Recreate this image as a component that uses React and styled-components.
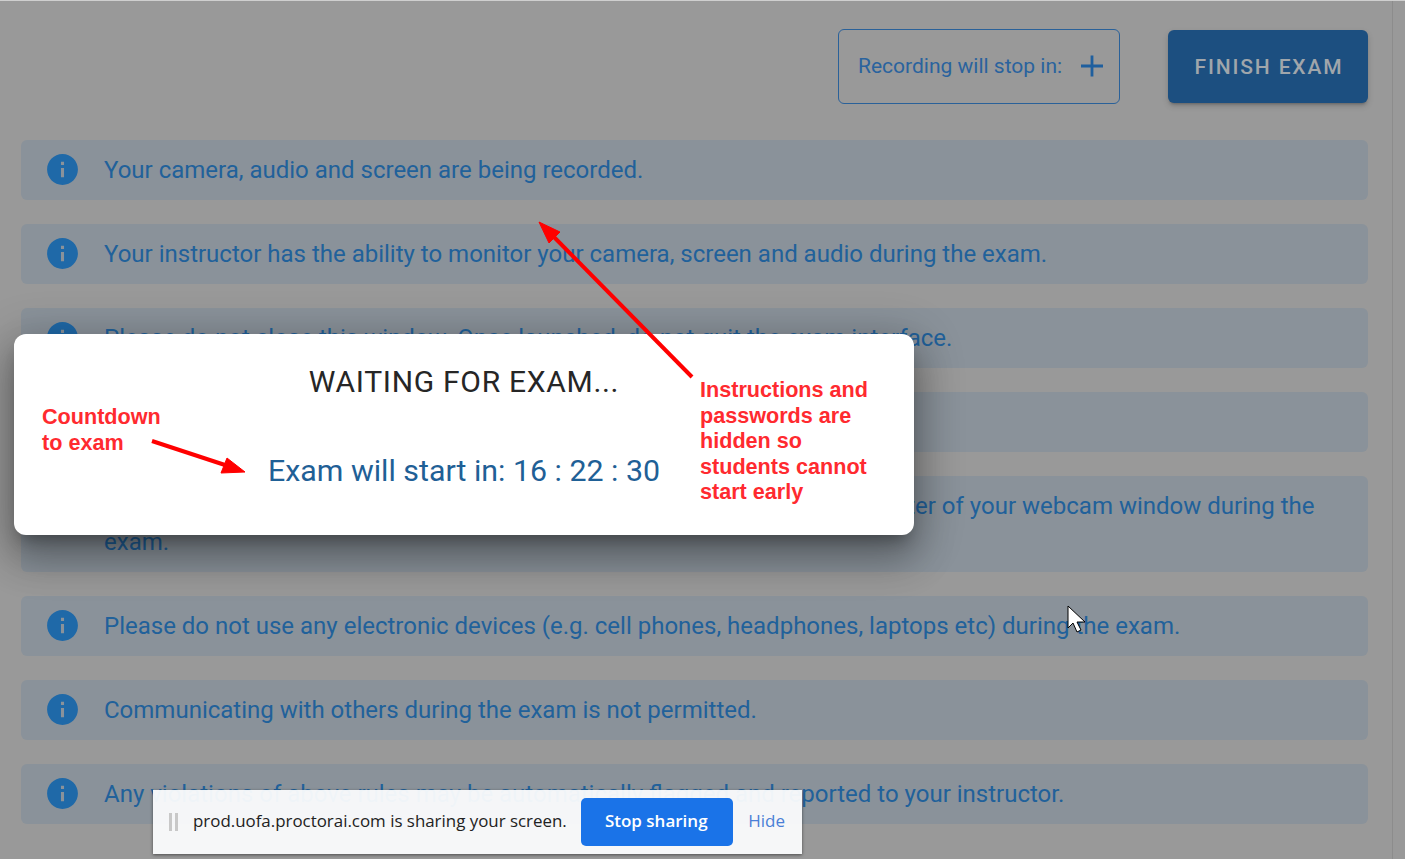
import React from 'react'
import styled, { createGlobalStyle } from 'styled-components'

const rules = [
    'Your camera, audio and screen are being recorded.',
    'Your instructor has the ability to monitor your camera, screen and audio during the exam.',
    'Please do not close this window. Once launched, do not quit the exam interface.',
    '',
    'Please make sure that your face stays properly visible at all times in the center of your webcam window during the exam.',
    'Please do not use any electronic devices (e.g. cell phones, headphones, laptops etc) during the exam.',
    'Communicating with others during the exam is not permitted.',
    'Any violations of above rules may be automatically flagged and reported to your instructor.',
]

function InfoIcon() {
    return (
        <IconBox viewBox="0 0 24 24">
            <path d="M12 2C6.48 2 2 6.48 2 12s4.48 10 10 10 10-4.48 10-10S17.52 2 12 2zm1 15h-2v-6h2v6zm0-8h-2V7h2v2z" />
        </IconBox>
    )
}

function App() {
    return (
        <Screen>
            <GlobalStyle />
            <Page>
                <Header>
                    <Recording>
                        <span>Recording will stop in:</span>
                        <svg width="24" height="24" viewBox="0 0 24 24">
                            <path d="M12 1.5v21M1 12h22" stroke="#1f5f9e" strokeWidth="2.8" fill="none" />
                        </svg>
                    </Recording>
                    <FinishButton>FINISH EXAM</FinishButton>
                </Header>
                <Rules>
                    {rules.map((text, i) => (
                        <Rule key={i}>
                            <InfoIcon />
                            <RuleText>{text}</RuleText>
                        </Rule>
                    ))}
                </Rules>
            </Page>

            <Dialog>
                <DialogTitle>WAITING FOR EXAM...</DialogTitle>
                <Countdown>Exam will start in: 16 : 22 : 30</Countdown>
            </Dialog>

            <CountdownNote>Countdown<br />to exam</CountdownNote>
            <InstructionsNote>
                Instructions and<br />passwords are<br />hidden so<br />students cannot<br />start early
            </InstructionsNote>

            <Arrows width="1405" height="859" viewBox="0 0 1405 859">
                <path d="M692 377L551 234" stroke="#ff0000" strokeWidth="4" fill="none" />
                <path d="M539 222L560 232L549 243Z" fill="#ff0000" stroke="#ff0000" strokeWidth="1" />
                <path d="M152 441L228 466" stroke="#ff0000" strokeWidth="4" fill="none" />
                <path d="M245 472L221 473L227 458Z" fill="#ff0000" stroke="#ff0000" strokeWidth="1" />
                <path d="M1068 606V628L1073 623L1077 632L1081 630L1077 622H1085Z" fill="#ffffff" stroke="#000000" strokeWidth="1" />
            </Arrows>

            <ShareBar>
                <Grip />
                <ShareText>prod.uofa.proctorai.com is sharing your screen.</ShareText>
                <StopButton>Stop sharing</StopButton>
                <HideLink>Hide</HideLink>
            </ShareBar>
        </Screen>
    )
}

const GlobalStyle = createGlobalStyle`
    html, body {
        margin: 0;
        background: #999999;
        overflow: hidden;
    }
`

const Screen = styled.div`
    position: relative;
    width: 1405px;
    height: 859px;
    overflow: hidden;
    border-top: 1px solid #cfcfcf;
    box-sizing: border-box;
    background: #999999;
    font-family: Roboto, "Liberation Sans", sans-serif;
`

const Page = styled.div`
    width: 1393px;
    height: 858px;
    box-sizing: border-box;
    padding: 28px 24px 0 21px;
    border-right: 1px solid #8c8c8c;
`

const Header = styled.div`
    display: flex;
    justify-content: flex-end;
    align-items: center;
    gap: 48px;
    height: 75px;
    margin-bottom: 36px;
`

const Recording = styled.div`
    display: flex;
    align-items: center;
    justify-content: space-between;
    width: 282px;
    height: 75px;
    box-sizing: border-box;
    padding: 0 15px 2px 19px;
    border: 1px solid #2a6199;
    border-radius: 6px;
    color: #2a639e;
    font-size: 21px;
`

const FinishButton = styled.div`
    display: flex;
    align-items: center;
    justify-content: center;
    width: 200px;
    height: 73px;
    box-sizing: border-box;
    padding-left: 2px;
    border-radius: 6px;
    background: #1c4f80;
    color: #a0a6ab;
    font-size: 21px;
    font-weight: 500;
    letter-spacing: 1.85px;
    box-shadow: 0 3px 3px -2px rgba(0, 0, 0, 0.25), 0 3px 6px 0 rgba(0, 0, 0, 0.16);
`

const Rules = styled.div`
    display: flex;
    flex-direction: column;
    gap: 24px;
`

const Rule = styled.div`
    display: flex;
    align-items: flex-start;
    padding: 12px 40px 12px 23px;
    border-radius: 6px;
    background: #8a929a;
    min-height: 36px;
`

const IconBox = styled.svg`
    flex: none;
    width: 37px;
    height: 37px;
    margin-right: 24px;
    margin-top: -1px;
    fill: #1f69a8;
`

const RuleText = styled.div`
    margin-left: -1px;
    color: #21619a;
    font-size: 24px;
    line-height: 36px;
`

const Dialog = styled.div`
    position: absolute;
    left: 14px;
    top: 333px;
    display: flex;
    flex-direction: column;
    align-items: center;
    box-sizing: border-box;
    width: 900px;
    height: 201px;
    padding-top: 30px;
    border-radius: 12px;
    background: #ffffff;
    box-shadow: 0 11px 15px -7px rgba(0, 0, 0, 0.3), 0 24px 38px 3px rgba(0, 0, 0, 0.22), 0 9px 46px 8px rgba(0, 0, 0, 0.2);
`

const DialogTitle = styled.div`
    color: #262626;
    font-size: 30px;
    line-height: 36px;
    letter-spacing: 0.7px;
`

const Countdown = styled.div`
    margin-top: 53px;
    color: #1f6096;
    font-size: 30.35px;
    line-height: 36px;
`

const Note = styled.div`
    position: absolute;
    color: #ff2a2f;
    font-family: "Liberation Sans", Arial, sans-serif;
    font-size: 21.6px;
    font-weight: 700;
    line-height: 25.5px;
`

const CountdownNote = styled(Note)`
    left: 42px;
    top: 403px;
`

const InstructionsNote = styled(Note)`
    left: 700px;
    top: 376px;
`

const Arrows = styled.svg`
    position: absolute;
    left: 0;
    top: -1px;
    pointer-events: none;
`

const ShareBar = styled.div`
    position: absolute;
    left: 153px;
    top: 789px;
    display: flex;
    align-items: center;
    box-sizing: border-box;
    width: 649px;
    height: 64px;
    padding: 0 17px 0 16px;
    background: rgba(251, 252, 253, 0.95);
    box-shadow: 0 1px 3px rgba(0, 0, 0, 0.5);
    font-family: "Open Sans", "Noto Sans", sans-serif;
`

const Grip = styled.div`
    flex: none;
    width: 3px;
    height: 18px;
    margin-right: 14px;
    border-left: 3px solid #c8c8c8;
    border-right: 3px solid #c8c8c8;
`

const ShareText = styled.div`
    flex: 1;
    margin-left: 1px;
    padding-bottom: 3px;
    color: #222222;
    font-size: 16.9px;
    white-space: nowrap;
`

const StopButton = styled.div`
    display: flex;
    align-items: center;
    justify-content: center;
    width: 152px;
    height: 48px;
    box-sizing: border-box;
    margin-right: 15px;
    padding: 0 2px 3px 0;
    border-radius: 5px;
    background: #1a73e8;
    color: #ffffff;
    font-size: 17px;
    font-weight: 600;
`

const HideLink = styled.div`
    padding-bottom: 3px;
    color: #4a7fd6;
    font-size: 17px;
`

export default App
